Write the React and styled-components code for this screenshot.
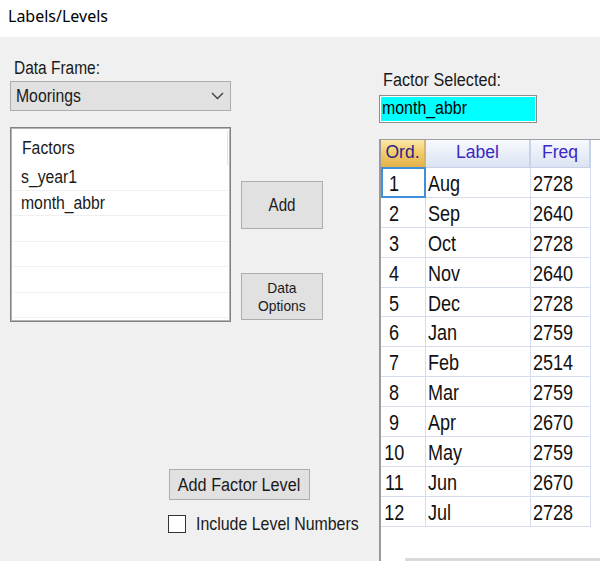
import React from 'react';
import styled, { createGlobalStyle } from 'styled-components';

const SANS = `"Liberation Sans", Arial, sans-serif`;

const GlobalStyle = createGlobalStyle`
    html, body {
        margin: 0;
        padding: 0;
    }
    body {
        width: 600px;
        height: 561px;
        overflow: hidden;
        font-family: ${SANS};
        color: #1a1a1a;
    }
    * {
        box-sizing: border-box;
    }
`;

// the dialog's font is narrower than Arial, so the text is squeezed horizontally
const Squeeze = styled.span`
    display: inline-block;
    white-space: nowrap;
    transform: scaleX(${(p) => p.$k || 0.88});
    transform-origin: ${(p) => p.$origin || 'left'} center;
`;

const Window = styled.div`
    width: 600px;
    height: 561px;
    display: flex;
    flex-direction: column;
    overflow: hidden;
    background-color: #f0f0f0;
`;

const TitleBar = styled.div`
    flex: none;
    height: 37px;
    padding-left: 8px;

    font-family: "Noto Sans", sans-serif;
    font-size: 16px;
    line-height: 32px;
    color: #000;

    background-color: #fff;
`;

const Body = styled.div`
    flex: 1;
    display: flex;
    min-height: 0;
`;

const LeftPane = styled.div`
    flex: none;
    width: 379px;
    padding-left: 10px;
    display: flex;
    flex-direction: column;
`;

const RightPane = styled.div`
    flex: 1;
    min-width: 0;
    display: flex;
    flex-direction: column;
    overflow: hidden;
`;

const FieldLabel = styled.div`
    margin-top: ${(p) => p.$top}px;
    padding-left: 4px;
    font-size: 18px;
    line-height: 20px;
`;

const Combo = styled.div`
    width: 221px;
    height: 30px;
    margin-top: 3px;
    padding: 0 6px 0 5px;
    display: flex;
    align-items: center;
    justify-content: space-between;

    font-size: 17.5px;
    line-height: 28px;

    border: 1px solid #adadad;
    background-color: #e1e1e1;
`;

const ListRow = styled.div`
    margin-top: 16px;
    display: flex;
    gap: 10px;
`;

const ListBox = styled.div`
    width: 221px;
    height: 195px;
    padding: 0 1px 0 1px;

    border: 1px solid #828282;
    box-shadow: inset 0 0 0 1px #b4b4b4;
    background-color: #fff;
    overflow: hidden;
`;

const ListHeader = styled.div`
    width: 216px;
    height: 37px;
    padding: 3px 0 0 10px;
    font-size: 17.5px;
    line-height: 34px;
`;

const HeaderText = styled.div`
    height: 34px;
    border-right: 1px solid #e3e3e3;
`;

const ListItem = styled.div`
    height: 25.5px;
    margin: 0 1px 0 1px;
    padding-left: 8px;
    font-size: 17.5px;
    line-height: 25.5px;
    border-bottom: 1px solid #f0f0f0;
`;

const ButtonColumn = styled.div`
    padding-top: 54px;
    display: flex;
    flex-direction: column;
    gap: 44px;
`;

const Button = styled.button`
    width: ${(p) => p.$w}px;
    height: ${(p) => p.$h}px;
    margin: 0;
    padding: 0;

    font-family: ${SANS};
    font-size: ${(p) => p.$size || 18}px;
    line-height: ${(p) => p.$lh || 20}px;
    color: #1a1a1a;

    outline: none;
    border: 1px solid #adadad;
    border-radius: 0;
    background-color: #e1e1e1;
`;

const BottomArea = styled.div`
    margin-top: 147px;
    padding-left: 158px;
    display: flex;
    flex-direction: column;
    align-items: flex-start;
    gap: 14px;
`;

const WideButton = styled(Button)`
    margin-left: 1px;
`;

const CheckRow = styled.label`
    display: flex;
    align-items: flex-start;
    gap: 10px;
    font-size: 18.5px;
    line-height: 20px;
    white-space: nowrap;
`;

const CheckBox = styled.span`
    flex: none;
    width: 18px;
    height: 18px;
    margin-top: 1px;
    border: 1px solid #333;
    background-color: #fff;
`;

const SelectedBox = styled.div`
    width: 158px;
    height: 28px;
    margin-top: 5px;
    padding-left: 2px;

    font-size: 17.5px;
    line-height: 24px;
    color: #000;

    border: 1px solid #8c8c8c;
    box-shadow: inset 0 0 0 1px #fff;
    background-color: #00ffff;
`;

const GridArea = styled.div`
    flex: 1;
    margin-top: 16px;
    display: flex;
    flex-direction: column;

    border-top: 1px solid #a0a0a0;
    border-left: 2px solid #9a9a9a;
    background-color: #fff;
`;

const Table = styled.div`
    display: grid;
    grid-template-columns: 45px 105px 60px;
    grid-auto-rows: 29.9px;
    grid-template-rows: 28px;
`;

const HeadCell = styled.div`
    padding-bottom: 3px;
    display: flex;
    align-items: center;
    justify-content: center;

    font-size: 17.5px;
    line-height: 24px;
    color: ${(p) => (p.$active ? '#2e1f86' : '#3a27c4')};

    border-right: 2px solid ${(p) => (p.$active ? '#d6b46a' : '#c6d2e7')};
    border-bottom: 1px solid #c6d2e7;
    background: ${(p) =>
        p.$active
            ? 'linear-gradient(#fbe7aa, #f2cd6c 45%, #e4b14a)'
            : 'linear-gradient(#f7f9fd, #e9eef8 50%, #dbe3f3)'};
`;

const Cell = styled.div`
    position: relative;
    padding: 3px ${(p) => (p.$ord ? 18 : 0)}px 0 ${(p) => (p.$ord ? 0 : 2)}px;

    font-size: 22px;
    line-height: 26px;
    text-align: ${(p) => (p.$ord ? 'center' : 'left')};
    color: #111;

    border-right: 1px solid #d5ddec;
    border-bottom: 1px solid #d5ddec;

    &::after {
        content: '';
        display: ${(p) => (p.$selected ? 'block' : 'none')};
        position: absolute;
        inset: -1px -1px -1px 0;
        border: 2px solid #3f8fdb;
    }
`;

const ScrollStrip = styled.div`
    margin-top: auto;
    margin-left: 24px;
    height: 3px;
    background-color: #dadada;
`;

const Chevron = () => (
    <svg width="13" height="8" viewBox="0 0 13 8">
        <polyline points="1,1 6.5,6.5 12,1" fill="none" stroke="#3c3c3c" strokeWidth="1.3" />
    </svg>
);

const factors = ['s_year1', 'month_abbr', '', '', '', ''];

const levels = [
    [1, 'Aug', 2728],
    [2, 'Sep', 2640],
    [3, 'Oct', 2728],
    [4, 'Nov', 2640],
    [5, 'Dec', 2728],
    [6, 'Jan', 2759],
    [7, 'Feb', 2514],
    [8, 'Mar', 2759],
    [9, 'Apr', 2670],
    [10, 'May', 2759],
    [11, 'Jun', 2670],
    [12, 'Jul', 2728],
];

const App = () => {
    return <Window>
        <GlobalStyle />
        <TitleBar>Labels/Levels</TitleBar>
        <Body>
            <LeftPane>
                <FieldLabel $top={21}><Squeeze $k={0.86}>Data Frame:</Squeeze></FieldLabel>
                <Combo>
                    <Squeeze $k={0.9}>Moorings</Squeeze>
                    <Chevron />
                </Combo>
                <ListRow>
                    <ListBox>
                        <ListHeader><HeaderText><Squeeze $k={0.9}>Factors</Squeeze></HeaderText></ListHeader>
                        {factors.map((f, i) => <ListItem key={i}><Squeeze $k={0.9}>{f}</Squeeze></ListItem>)}
                    </ListBox>
                    <ButtonColumn>
                        <Button $w={82} $h={48}><Squeeze $k={0.84} $origin="center">Add</Squeeze></Button>
                        <Button $w={82} $h={47} $size={15} $lh={18}>
                            <Squeeze $k={0.92} $origin="center">Data<br />Options</Squeeze>
                        </Button>
                    </ButtonColumn>
                </ListRow>
                <BottomArea>
                    <WideButton $w={141} $h={31}><Squeeze $k={0.9} $origin="center">Add Factor Level</Squeeze></WideButton>
                    <CheckRow>
                        <CheckBox />
                        <Squeeze $k={0.86}>Include Level Numbers</Squeeze>
                    </CheckRow>
                </BottomArea>
            </LeftPane>
            <RightPane>
                <FieldLabel $top={33}><Squeeze $k={0.9}>Factor Selected:</Squeeze></FieldLabel>
                <SelectedBox><Squeeze $k={0.91}>month_abbr</Squeeze></SelectedBox>
                <GridArea>
                    <Table>
                        <HeadCell $active>Ord.</HeadCell>
                        <HeadCell>Label</HeadCell>
                        <HeadCell>Freq</HeadCell>
                        {levels.map(([ord, label, freq]) => (
                            <React.Fragment key={ord}>
                                <Cell $ord $selected={ord === 1}><Squeeze $k={0.82} $origin="center">{ord}</Squeeze></Cell>
                                <Cell><Squeeze $k={0.82}>{label}</Squeeze></Cell>
                                <Cell><Squeeze $k={0.82}>{freq}</Squeeze></Cell>
                            </React.Fragment>
                        ))}
                    </Table>
                    <ScrollStrip />
                </GridArea>
            </RightPane>
        </Body>
    </Window>
}

export default App;
